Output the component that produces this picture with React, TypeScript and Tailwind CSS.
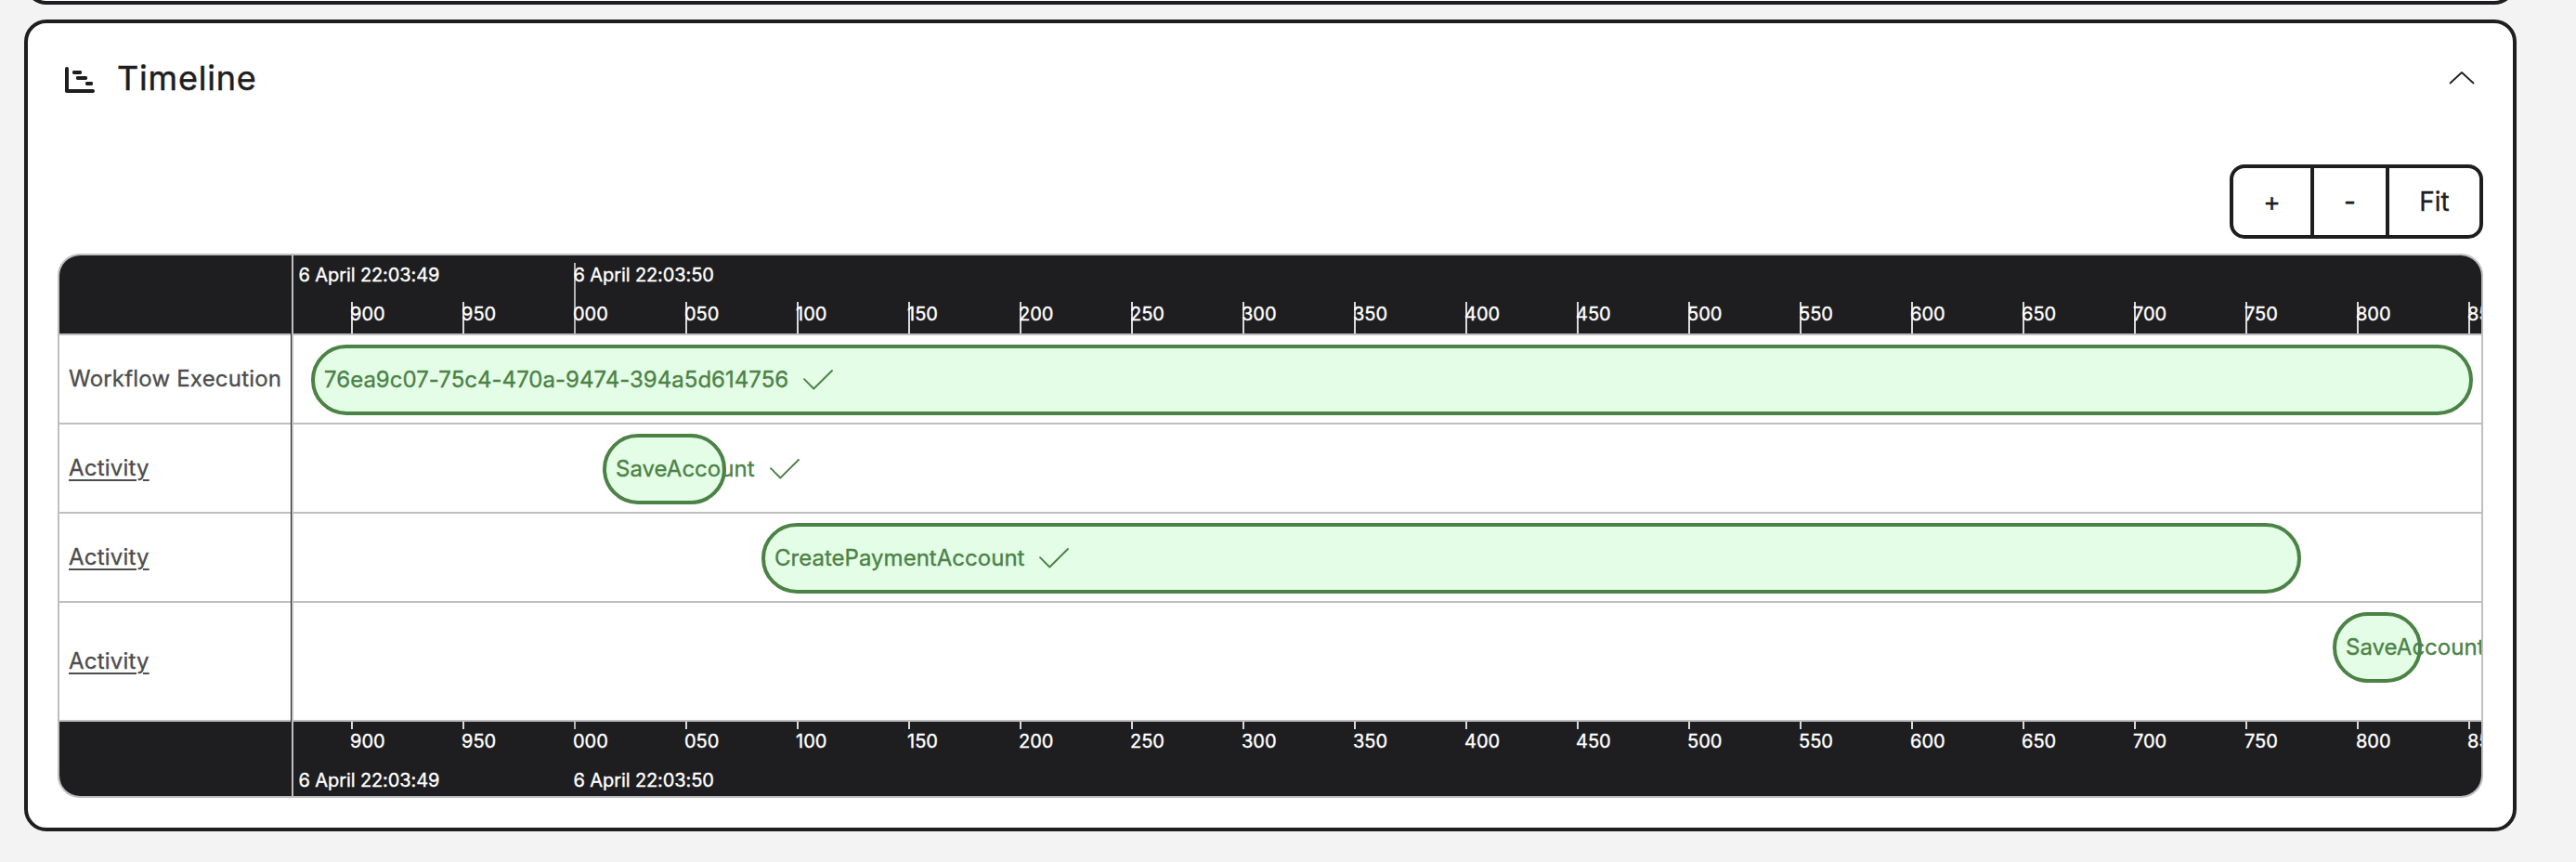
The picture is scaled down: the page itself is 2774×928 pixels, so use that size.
type Bar = { label: string; left: number; width: number };
type Row = { name: string; link: boolean; bar: Bar };

const rows: Row[] = [
  { name: "Workflow Execution", link: false, bar: { label: "76ea9c07-75c4-470a-9474-394a5d614756", left: 19, width: 2328 } },
  { name: "Activity", link: true, bar: { label: "SaveAccount", left: 333, width: 133 } },
  { name: "Activity", link: true, bar: { label: "CreatePaymentAccount", left: 504, width: 1658 } },
  { name: "Activity", link: true, bar: { label: "SaveAccount", left: 2196, width: 96 } },
];

const minorTicks = Array.from({ length: 20 }, (_, i) => ({
  left: 62 + i * 120,
  label: String((900 + i * 50) % 1000).padStart(3, "0"),
  major: i === 2,
}));

const majorLabels = [
  { left: 5.5, label: "6 April 22:03:49" },
  { left: 301.5, label: "6 April 22:03:50" },
];

function TimelineIcon() {
  return (
    <svg width="32" height="28" viewBox="0 0 32 28" fill="currentColor" className="mb-[-4px] block shrink-0">
      <path d="M2 2V26H30" fill="none" stroke="currentColor" strokeWidth="4" strokeLinecap="round" strokeLinejoin="round" />
      <rect x="8" y="4" width="10" height="4" rx="1.4" />
      <rect x="12" y="10" width="12" height="4" rx="1.4" />
      <rect x="22" y="16" width="8" height="4" rx="1.4" />
    </svg>
  );
}

function Check() {
  return (
    <svg width="34" height="24" viewBox="0 0 34 24" fill="none" stroke="currentColor" strokeWidth="1.9" strokeLinecap="round" strokeLinejoin="round" className="block shrink-0">
      <path d="M2 11.2L12.3 21.5L32 2" />
    </svg>
  );
}

function Axis({ footer = false }: { footer?: boolean }) {
  return (
    <div className={footer ? "relative h-[80px] bg-[#1e1e20]" : "relative h-[84px] bg-[#1e1e20]"}>
      {minorTicks.map((t) => (
        <span
          key={t.left}
          style={{ left: t.left }}
          className={
            footer
              ? t.major
                ? "absolute top-0 h-2 w-[2px] bg-[#b3b3b3]"
                : "absolute top-0 h-2 w-[2px] bg-[#d9d9d9]"
              : t.major
                ? "absolute top-2 bottom-0 w-[2px] bg-[#b3b3b3]"
                : "absolute top-[50px] bottom-0 w-[2px] bg-[#d9d9d9]"
          }
        />
      ))}
      {minorTicks.map((t) => (
        <span
          key={t.label}
          style={{ left: t.left - 1 }}
          className={footer ? "absolute top-[9px] text-xl leading-6 text-white" : "absolute top-[51px] text-xl leading-6 text-white"}
        >
          {t.label}
        </span>
      ))}
      {majorLabels.map((m) => (
        <span
          key={m.label}
          style={{ left: m.left }}
          className={
            footer
              ? "absolute top-[51px] text-xl leading-6 tracking-[-0.1px] whitespace-nowrap text-white"
              : "absolute top-[9px] text-xl leading-6 tracking-[-0.1px] whitespace-nowrap text-white"
          }
        >
          {m.label}
        </span>
      ))}
    </div>
  );
}

export default function App() {
  return (
    <div className="h-[928px] w-full overflow-hidden bg-[#f3f3f3] pl-[26px] font-[Inter,sans-serif] text-[#1e1e20] [-webkit-text-stroke:0.35px_currentColor]">
      <div className="-mt-[59px] h-16 w-[2684px] rounded-3xl border-4 border-[#1e1e20] bg-white" />

      <section className="mt-4 flex h-[874px] w-[2684px] flex-col rounded-3xl border-4 border-[#1e1e20] bg-white px-8 pb-8">
        <header className="mt-[35px] flex h-12 items-center pr-[9px] pl-2">
          <TimelineIcon />
          <h2 className="ml-6 text-4xl leading-[48px] tracking-[0.8px] [-webkit-text-stroke:0.5px_currentColor]">Timeline</h2>
          <svg width="28" height="16" viewBox="0 0 28 16" fill="none" stroke="currentColor" strokeWidth="1.8" strokeLinecap="round" strokeLinejoin="round" className="ml-auto block">
            <path d="M1.5 13.5L14 2L26.5 13.5" />
          </svg>
        </header>

        <div className="mt-[69px] flex h-20 shrink-0 self-end rounded-2xl border-4 border-[#1e1e20] text-[28px] leading-none">
          <button className="w-[87px] border-r-4 border-[#1e1e20]">+</button>
          <button className="w-[81px] border-r-4 border-[#1e1e20]">-</button>
          <button className="w-[97px]">Fit</button>
        </div>

        <div className="mt-4 flex h-[586px] shrink-0 overflow-hidden rounded-3xl border-2 border-[#bfbfbf]">
          <div className="flex w-[252px] shrink-0 flex-col border-r-2 border-[#bfbfbf]">
            <div className="h-[84px] bg-[#1e1e20]" />
            <div className="flex grow flex-col border-r border-[#1e1e20]">
              {rows.map((r, i) => (
                <div
                  key={i}
                  className={
                    i === 3
                      ? "flex grow items-center border-y-2 border-[#bfbfbf] pl-[10px]"
                      : "flex h-24 items-center border-t-2 border-[#bfbfbf] pl-[10px]"
                  }
                >
                  <span
                    className={
                      r.link
                        ? "text-2xl tracking-[0.2px] whitespace-nowrap text-[#4d4d4d] underline decoration-2 underline-offset-[4px]"
                        : "text-2xl tracking-[0.2px] whitespace-nowrap text-[#4d4d4d]"
                    }
                  >
                    {r.name}
                  </span>
                </div>
              ))}
            </div>
            <div className="h-[80px] bg-[#1e1e20]" />
          </div>

          <div className="flex min-w-0 grow flex-col overflow-hidden">
            <Axis />
            {rows.map((r, i) => (
              <div
                key={i}
                className={
                  i === 3
                    ? "grow border-y-2 border-[#bfbfbf] pt-[10px]"
                    : "h-24 border-t-2 border-[#bfbfbf] pt-[10px]"
                }
              >
                <div
                  style={{ marginLeft: r.bar.left, width: r.bar.width }}
                  className="flex h-[76px] items-center gap-[15px] rounded-full border-4 border-[#4b8245] bg-[#e4fde6] pl-[10px] text-2xl tracking-[0.02px] whitespace-nowrap text-[#4b8245]"
                >
                  <span>{r.bar.label}</span>
                  <Check />
                </div>
              </div>
            ))}
            <Axis footer />
          </div>
        </div>
      </section>
    </div>
  );
}
